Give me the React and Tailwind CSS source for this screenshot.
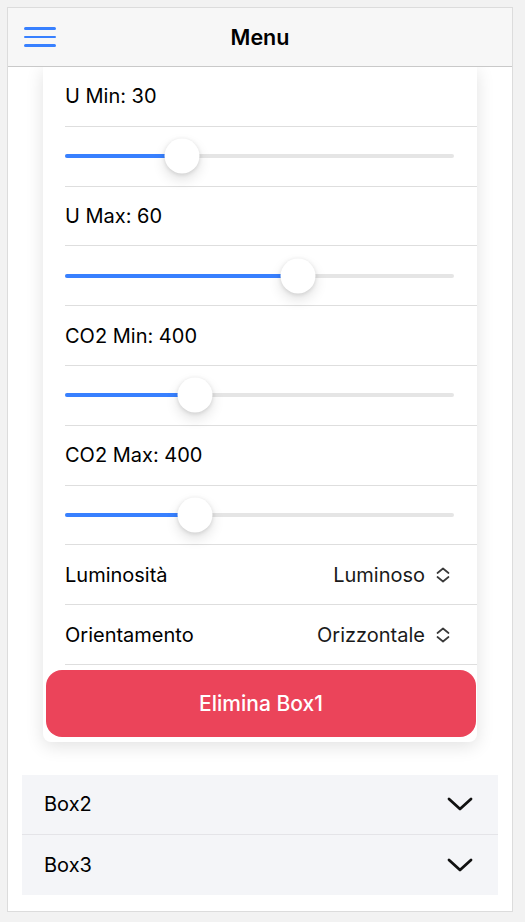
const font = { fontFamily: 'Inter, "Noto Sans", sans-serif' };

function Slider({ value, min, max }) {
  const pct = ((value - min) / (max - min)) * 100;
  return (
    <div className="h-[59.8px] pl-[22px]">
      <div className="h-full flex items-center border-b border-[#dedede] pr-[23px]">
        <div className="relative w-full h-[4px] rounded-full bg-[#e5e5e5]">
          <div className="h-full rounded-full bg-[#3880ff]" style={{ width: `${pct}%` }} />
          <div
            className="absolute top-1/2 w-[35px] h-[35px] -translate-x-1/2 -translate-y-1/2 rounded-full bg-white shadow-[0_1px_4px_rgba(0,0,0,0.12),0_6px_13px_rgba(0,0,0,0.12)]"
            style={{ left: `${pct}%` }}
          />
        </div>
      </div>
    </div>
  );
}

function Label({ children }) {
  return (
    <div className="h-[59.8px] pl-[22px]">
      <div className="h-full flex items-center border-b border-[#dedede] text-[20px] text-black">
        {children}
      </div>
    </div>
  );
}

// ionic style chevron-expand
function Expand() {
  return (
    <svg width="14" height="16" viewBox="0 0 14 16" fill="none">
      <path d="M1.5 6 L7 1.5 L12.5 6" stroke="#3a3a3a" strokeWidth="1.7" strokeLinecap="round" strokeLinejoin="round" />
      <path d="M1.5 10 L7 14.5 L12.5 10" stroke="#3a3a3a" strokeWidth="1.7" strokeLinecap="round" strokeLinejoin="round" />
    </svg>
  );
}

function SelectRow({ label, value }) {
  return (
    <div className="h-[59.8px] pl-[22px]">
      <div className="h-full flex items-center justify-between border-b border-[#dedede] pr-[27px] text-[20px] text-black">
        <span>{label}</span>
        <span className="flex items-center gap-[11px] text-[#1a1a1a]">
          {value}
          <Expand />
        </span>
      </div>
    </div>
  );
}

function BoxRow({ name, last }) {
  return (
    <div
      className={
        'h-[60px] flex items-center justify-between pl-[22px] pr-[25px] bg-[#f4f5f8] text-[20px] text-black ' +
        (last ? '' : 'border-b border-[#e4e4e8]')
      }
    >
      <span>{name}</span>
      <svg width="26" height="16" viewBox="0 0 26 16" fill="none">
        <path d="M2 3 L13 13 L24 3" stroke="#111" strokeWidth="2.8" strokeLinecap="round" strokeLinejoin="round" />
      </svg>
    </div>
  );
}

export default function App() {
  const sliders = [
    { label: 'U Min: 30', value: 30, min: 0, max: 100 },
    { label: 'U Max: 60', value: 60, min: 0, max: 100 },
    { label: 'CO2 Min: 400', value: 400, min: 0, max: 1200 },
    { label: 'CO2 Max: 400', value: 400, min: 0, max: 1200 },
  ];

  return (
    <div className="min-h-[922px] w-[525px] bg-[#f2f2f2] pt-[7px] pl-[7px]" style={font}>
      <div className="w-[506px] h-[905px] bg-white border border-[#dcdcdc] flex flex-col overflow-hidden">
        <header className="h-[59px] shrink-0 flex items-center relative bg-[#f7f7f7] border-b border-[#c9c9c9]">
          <button className="ml-[16px] w-[32px] flex flex-col gap-[6px]">
            <span className="block h-[2.5px] rounded-full bg-[#3880ff]" />
            <span className="block h-[2.5px] rounded-full bg-[#3880ff]" />
            <span className="block h-[2.5px] rounded-full bg-[#3880ff]" />
          </button>
          <h1 className="absolute left-0 right-0 text-center text-[21.5px] font-semibold text-black pointer-events-none">
            Menu
          </h1>
        </header>

        <div className="flex flex-col">
          <div className="mx-[35px] bg-white rounded-b-[8px] shadow-[0_4px_18px_rgba(0,0,0,0.12)] pb-[5px]">
            {sliders.map((s) => (
              <div key={s.label}>
                <Label>{s.label}</Label>
                <Slider value={s.value} min={s.min} max={s.max} />
              </div>
            ))}
            <SelectRow label="Luminosità" value="Luminoso" />
            <SelectRow label="Orientamento" value="Orizzontale" />
            <button className="mt-[5px] ml-[3px] w-[430px] h-[67px] rounded-[16px] bg-[#eb445a] text-white text-[21px] font-medium">
              Elimina Box1
            </button>
          </div>

          <div className="mt-[33px] mx-[14px]">
            <BoxRow name="Box2" />
            <BoxRow name="Box3" last />
          </div>
        </div>
      </div>
    </div>
  );
}
